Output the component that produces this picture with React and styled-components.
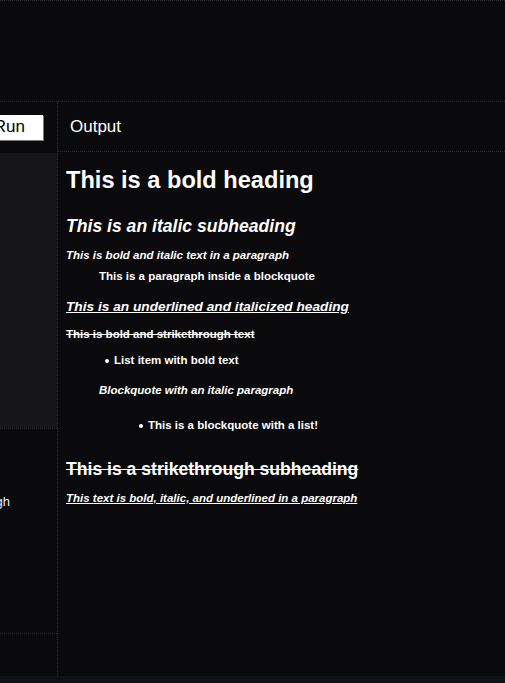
import React from 'react';
import styled, { createGlobalStyle } from 'styled-components';

const Global = createGlobalStyle`
  html, body {
    margin: 0;
    padding: 0;
    background: #0a0a0c;
    height: 100%;
  }
  body {
    font-family: "Liberation Sans", Arial, sans-serif;
    color: #fff;
  }
`;

const dots = '1px dotted #2a2a2f';

function App() {
  return (
    <Page>
      <Global />
      <TopBar />
      <Main>
        <Side>
          <SideHeader>
            <RunButton>Run</RunButton>
          </SideHeader>
          <Editor />
          <SideSection $h={204}>
            <Clipped>strikethrough</Clipped>
          </SideSection>
          <SideSection />
        </Side>
        <Output>
          <OutputHeader>Output</OutputHeader>
          <OutputBody>
            <H1>This is a bold heading</H1>
            <H2 $mt={21.5}><i>This is an italic subheading</i></H2>
            <P $mt={11}><b><i>This is bold and italic text in a paragraph</i></b></P>
            <Quote $mt={7}><P><b>This is a paragraph inside a blockquote</b></P></Quote>
            <H3 $mt={16.5}><u><i>This is an underlined and italicized heading</i></u></H3>
            <P $mt={12}><b><s>This is bold and strikethrough text</s></b></P>
            <List $mt={11.5} $indent={48}>
              <Item><b>List item with bold text</b></Item>
            </List>
            <Quote $mt={16}>
              <P><b><i>Blockquote with an italic paragraph</i></b></P>
              <List $mt={21} $indent={49}>
                <Item><b>This is a blockquote with a list!</b></Item>
              </List>
            </Quote>
            <H2 $mt={27.5}><s>This is a strikethrough subheading</s></H2>
            <P $mt={10.5}><b><i><u>This text is bold, italic, and underlined in a paragraph</u></i></b></P>
          </OutputBody>
        </Output>
      </Main>
      <BottomStrip />
    </Page>
  );
}

export default App;

const Page = styled.div`
  height: 683px;
  display: flex;
  flex-direction: column;
  overflow: hidden;
  background: #0a0a0c;
`;

const TopBar = styled.div`
  box-sizing: border-box;
  height: 102px;
  border-top: ${dots};
  border-bottom: ${dots};
  flex-shrink: 0;
`;

const Main = styled.div`
  flex: 1;
  display: flex;
  min-height: 0;
`;

const Side = styled.div`
  width: 57px;
  flex-shrink: 0;
  border-right: ${dots};
  display: flex;
  flex-direction: column;
  overflow: hidden;
`;

const SideHeader = styled.div`
  height: 50px;
  display: flex;
  align-items: center;
  justify-content: flex-end;
  padding-right: 14px;
  flex-shrink: 0;
`;

const RunButton = styled.button`
  flex-shrink: 0;
  background: #fff;
  color: #000;
  border: none;
  font-family: "Liberation Sans", Arial, sans-serif;
  font-size: 17px;
  height: 25px;
  padding: 0 18px 0 20px;
  box-shadow: 1px 1px 0 #777;
`;

const Editor = styled.div`
  margin-top: 1px;
  height: 275px;
  background: #161618;
  flex-shrink: 0;
`;

const SideSection = styled.div`
  height: ${p => (p.$h ? `${p.$h}px` : 'auto')};
  flex: ${p => (p.$h ? '0 0 auto' : '1')};
  border-top: ${dots};
  display: flex;
  justify-content: flex-end;
  padding-right: 47px;
`;

const Clipped = styled.div`
  flex-shrink: 0;
  margin-top: 65px;
  font-size: 13px;
  line-height: 16px;
  color: #eee;
`;

const Output = styled.div`
  flex: 1;
  display: flex;
  flex-direction: column;
`;

const OutputHeader = styled.div`
  height: 50px;
  box-sizing: border-box;
  border-bottom: ${dots};
  display: flex;
  align-items: center;
  padding-left: 12px;
  font-size: 17px;
  flex-shrink: 0;
`;

const OutputBody = styled.div`
  padding: 14px 0 0 8px;
`;

const H1 = styled.h1`
  margin: 0;
  font-size: 23.6px;
  line-height: 28px;
  font-weight: bold;
`;

const H2 = styled.h2`
  margin: ${p => p.$mt || 0}px 0 0;
  font-size: 17.6px;
  line-height: 21px;
  font-weight: bold;
`;

const H3 = styled.h3`
  margin: ${p => p.$mt || 0}px 0 0;
  font-size: 13.7px;
  line-height: 16px;
  font-weight: bold;
`;

const P = styled.p`
  margin: ${p => p.$mt || 0}px 0 0;
  font-size: 11.5px;
  line-height: 14px;
`;

const Quote = styled.blockquote`
  margin: ${p => p.$mt || 0}px 0 0 33px;
`;

const List = styled.ul`
  list-style: none;
  margin: ${p => p.$mt || 0}px 0 0;
  padding-left: ${p => p.$indent}px;
`;

const Item = styled.li`
  font-size: 11.5px;
  line-height: 14px;
  position: relative;
  &::before {
    content: '';
    position: absolute;
    left: -9px;
    top: 6px;
    width: 4px;
    height: 4px;
    border-radius: 50%;
    background: #fff;
  }
`;

const BottomStrip = styled.div`
  height: 7px;
  background: #0e1218;
  flex-shrink: 0;
`;
